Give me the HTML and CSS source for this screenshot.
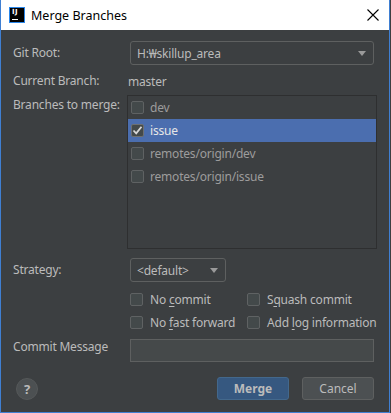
FILE: index.html
```html
<!DOCTYPE html>
<html lang="ko">
<head>
    <meta charset="UTF-8">
    <meta name="viewport" content="width=device-width, initial-scale=1.0">
    <title>Merge Branches</title>
    <link rel="stylesheet" href="styles.css">
</head>
<body>

    <div class="window">
        <div class="titlebar">
            <span class="app-icon"><span class="ij">IJ</span><span class="ij-bar"></span></span>
            <span class="title">Merge Branches</span>
            <svg class="close" width="12" height="12" viewBox="0 0 12 12">
                <path d="M0.5 0.5 L11.5 11.5 M11.5 0.5 L0.5 11.5" stroke="#000" stroke-width="1.1" fill="none"/>
            </svg>
        </div>

        <div class="content">
            <div class="row row-root">
                <span class="label">Git Root:</span>
                <div class="combo combo-wide">
                    <span class="combo-text">H:₩skillup_area</span>
                    <span class="arrow"></span>
                </div>
            </div>

            <div class="row row-current">
                <span class="label">Current Branch:</span>
                <span class="value">master</span>
            </div>

            <div class="row row-branches">
                <span class="label">Branches to merge:</span>
                <ul class="branch-list">
                    <li><span class="check"></span><span>dev</span></li>
                    <li class="selected">
                        <span class="check checked">
                            <svg width="11" height="11" viewBox="0 0 11 11"><path d="M1.5 5.5 L4.2 8.3 L9.5 1.8" stroke="#d8d8d8" stroke-width="1.8" fill="none"/></svg>
                        </span>
                        <span>issue</span>
                    </li>
                    <li><span class="check"></span><span>remotes/origin/dev</span></li>
                    <li><span class="check"></span><span>remotes/origin/issue</span></li>
                </ul>
            </div>

            <div class="row row-strategy">
                <span class="label">Strategy:</span>
                <div class="combo combo-small">
                    <span class="combo-text">&lt;default&gt;</span>
                    <span class="arrow"></span>
                </div>
            </div>

            <div class="options">
                <label class="option"><span class="check"></span><span class="option-text">No <u>c</u>ommit</span></label>
                <label class="option"><span class="check"></span><span class="option-text">S<u>q</u>uash commit</span></label>
                <label class="option"><span class="check"></span><span class="option-text">No <u>f</u>ast forward</span></label>
                <label class="option"><span class="check"></span><span class="option-text">Add <u>l</u>og information</span></label>
            </div>

            <div class="row row-message">
                <span class="label">Commit Message</span>
                <div class="text-input"></div>
            </div>
        </div>

        <div class="footer">
            <span class="help">?</span>
            <span class="spacer"></span>
            <button class="btn btn-default">Merge</button>
            <button class="btn">Cancel</button>
        </div>
    </div>

</body>
</html>
```

FILE: styles.css
```css
* {
    margin: 0;
    padding: 0;
    box-sizing: border-box;
}

body {
    font-family: "Noto Sans", "Noto Sans CJK KR", sans-serif;
    font-size: 12px;
    letter-spacing: -0.2px;
    background-color: #3c3f41;
    color: #bbbbbb;
}

.window {
    width: 390px;
    height: 413px;
    background-color: #3c3f41;
    border: 1px solid #3f7fd2;
    border-top: none;
}

/* title bar */
.titlebar {
    height: 30px;
    background-color: #fff;
    display: flex;
    align-items: center;
    padding: 0 10px 0 8px;
    color: #000;
}

.app-icon {
    position: relative;
    width: 16px;
    height: 16px;
    background-color: #000;
    border: 1px solid #2a86ea;
    flex-shrink: 0;
}

.ij {
    position: absolute;
    left: 2px;
    top: 1px;
    font-family: "DejaVu Sans", sans-serif;
    font-size: 7px;
    line-height: 7px;
    font-weight: bold;
    letter-spacing: 0.5px;
    color: #fff;
}

.ij-bar {
    position: absolute;
    left: 2px;
    bottom: 2px;
    width: 6px;
    height: 1px;
    background-color: #fff;
}

.title {
    margin-left: 6px;
    font-size: 12.5px;
    letter-spacing: 0;
    flex: 1;
}

.close {
    display: block;
}

/* form */
.content {
    padding: 11px 15px 0 12px;
}

.row {
    display: flex;
    align-items: center;
}

.label {
    width: 117px;
    flex-shrink: 0;
    line-height: 20px;
}

.row-root {
    height: 24px;
}

.combo {
    height: 24px;
    border: 1px solid #5e6060;
    border-radius: 3px;
    display: flex;
    align-items: center;
    padding: 0 7px 0 6px;
}

.combo-wide {
    flex: 1;
}

.combo-small {
    width: 96px;
}

.combo-text {
    flex: 1;
    color: #bbbbbb;
}

.arrow {
    width: 0;
    height: 0;
    border-left: 4px solid transparent;
    border-right: 4px solid transparent;
    border-top: 5px solid #9a9a9a;
}

.row-current {
    margin-top: 6px;
    height: 20px;
}

.value {
    margin-left: -2px;
}

.row-branches {
    margin-top: 4px;
    align-items: flex-start;
}

.branch-list {
    list-style: none;
    flex: 1;
    height: 154px;
    margin: 0 -3px;
    border: 1px solid #2e2f30;
}

.branch-list li {
    height: 23px;
    display: flex;
    align-items: center;
    padding-left: 3px;
    color: #9c9c9c;
}

.branch-list li.selected {
    background-color: #4b6eaf;
    color: #e6e6e6;
}

.check {
    width: 13px;
    height: 13px;
    border: 1px solid #5f6263;
    border-radius: 2px;
    background-color: #43494a;
    margin-right: 6px;
    display: flex;
    align-items: center;
    justify-content: center;
    flex-shrink: 0;
}

.check.checked {
    border-color: #6d7072;
}

.row-strategy {
    margin-top: 9px;
}

.options {
    margin-top: 6px;
    margin-left: 117px;
    display: grid;
    grid-template-columns: 117px 1fr;
    grid-auto-rows: 23px;
}

.option {
    display: flex;
    align-items: center;
    white-space: nowrap;
}

.option .check {
    margin-right: 7px;
}

.option u {
    text-underline-offset: 2px;
}

.row-message {
    margin-top: 5px;
    align-items: flex-start;
}

.row-message .label {
    line-height: 15px;
}

.text-input {
    flex: 1;
    height: 23px;
    background-color: #45494a;
    border: 1px solid #5e6060;
}

/* footer */
.footer {
    margin-top: 15px;
    display: flex;
    align-items: center;
    padding: 0 15px 0 15px;
}

.help {
    width: 22px;
    height: 22px;
    border-radius: 50%;
    background-color: #4c5052;
    border: 1px solid #555859;
    display: flex;
    align-items: center;
    justify-content: center;
    font-weight: bold;
    font-size: 13px;
    color: #bbbbbb;
}

.spacer {
    flex: 1;
}

.btn {
    width: 72px;
    height: 23px;
    border: 1px solid #5e6060;
    border-radius: 3px;
    background-color: #4c5052;
    color: #bbbbbb;
    font-family: "Noto Sans", "Noto Sans CJK KR", sans-serif;
    font-size: 12px;
    margin-left: 13px;
}

.btn-default {
    background-color: #365880;
    border-color: #43688c;
    font-weight: bold;
}
```
